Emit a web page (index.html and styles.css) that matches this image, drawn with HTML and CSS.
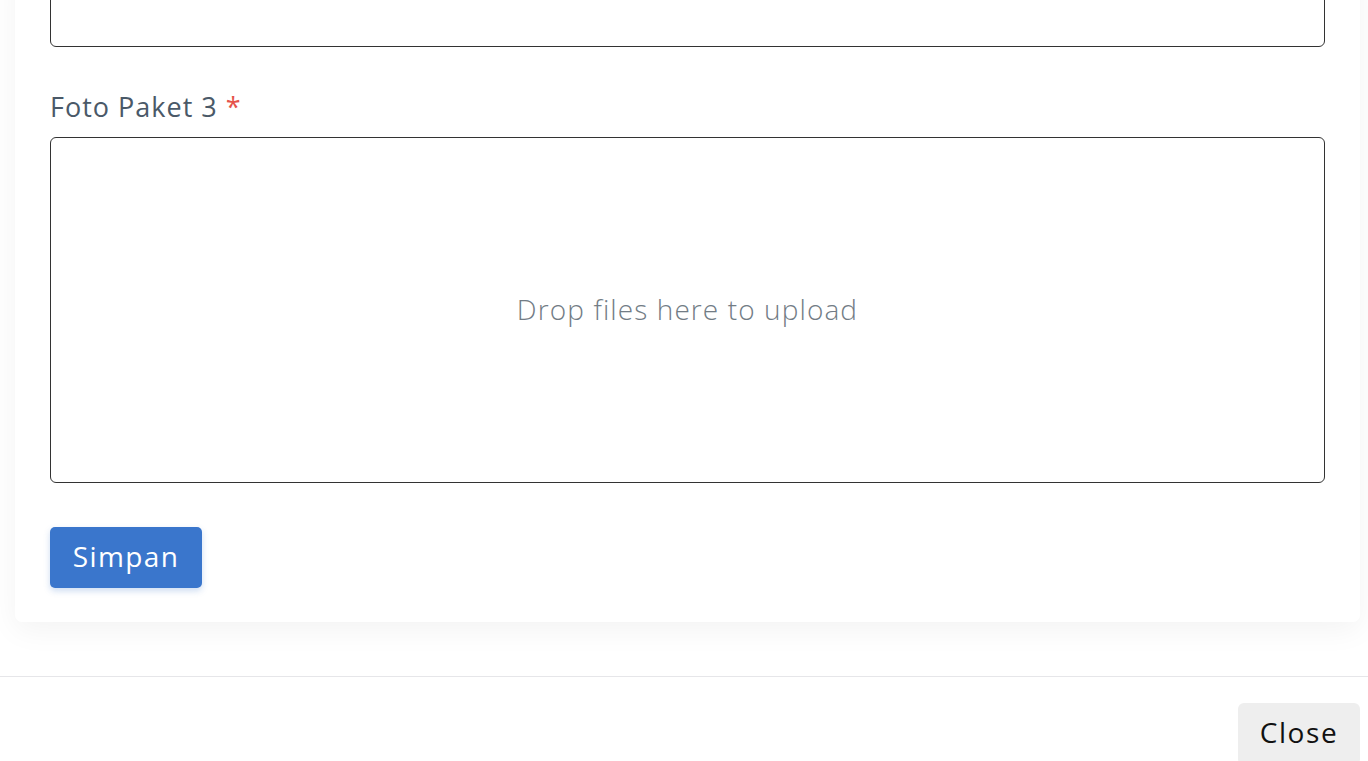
FILE: index.html
```html
<!DOCTYPE html>
<html lang="id">
<head>
<meta charset="utf-8">
<title>Foto Paket</title>
<link rel="stylesheet" href="styles.css">
</head>
<body>
<div class="modal">
  <div class="modal-body">
    <div class="card">
      <div class="input-box"></div>
      <div class="field">
        <label class="label">Foto Paket 3 <span class="req">*</span></label>
        <div class="dropzone"><span class="dz-text">Drop files here to upload</span></div>
      </div>
      <button class="btn-primary">Simpan</button>
    </div>
  </div>
  <div class="modal-footer">
    <button class="btn-close">Close</button>
  </div>
</div>
</body>
</html>
```
FILE: styles.css
```css
html, body {
  margin: 0;
  padding: 0;
  background: #ffffff;
  overflow: hidden;
  height: 761px;
}
body {
  font-family: "Open Sans", "Liberation Sans", sans-serif;
}
.modal-body {
  padding: 0 8px 54px 15px;
  background: #ffffff;
}
.card {
  background: #ffffff;
  border-radius: 0 0 7px 7px;
  padding: 0 35px 34px 35px;
  box-shadow: 0 8px 30px rgba(0, 0, 0, 0.05);
}
.input-box {
  height: 80px;
  margin-top: -35px;
  border: 1px solid #333333;
  border-radius: 6px;
}
.field {
  margin-top: 41px;
}
.label {
  display: block;
  font-size: 27px;
  letter-spacing: 1px;
  line-height: 38px;
  color: #4a5968;
  margin-bottom: 11px;
}
.req {
  color: #e5534b;
}
.dropzone {
  height: 344px;
  border: 1px solid #333333;
  border-radius: 6px;
  display: flex;
  align-items: center;
  justify-content: center;
}
.dz-text {
  font-size: 28px;
  font-weight: 300;
  letter-spacing: 1.1px;
  color: #727c85;
  margin-top: -3px;
}
.btn-primary {
  margin-top: 44px;
  display: block;
  width: 152px;
  height: 61px;
  padding: 0 0 4px 0;
  border: none;
  border-radius: 5px;
  background: #3a76cc;
  color: #ffffff;
  font-family: inherit;
  font-size: 28px;
  letter-spacing: 1.4px;
  box-shadow: 0 3px 6px rgba(58, 118, 204, 0.25);
}
.modal-footer {
  border-top: 1px solid #e6e6e9;
  display: flex;
  justify-content: flex-end;
  padding: 26px 8px 0 0;
}
.btn-close {
  width: 122px;
  height: 62px;
  padding: 0 0 4px 0;
  border: none;
  border-radius: 6px;
  background: #eeeeee;
  color: #111111;
  font-family: inherit;
  font-size: 28px;
  letter-spacing: 1.6px;
}
```
